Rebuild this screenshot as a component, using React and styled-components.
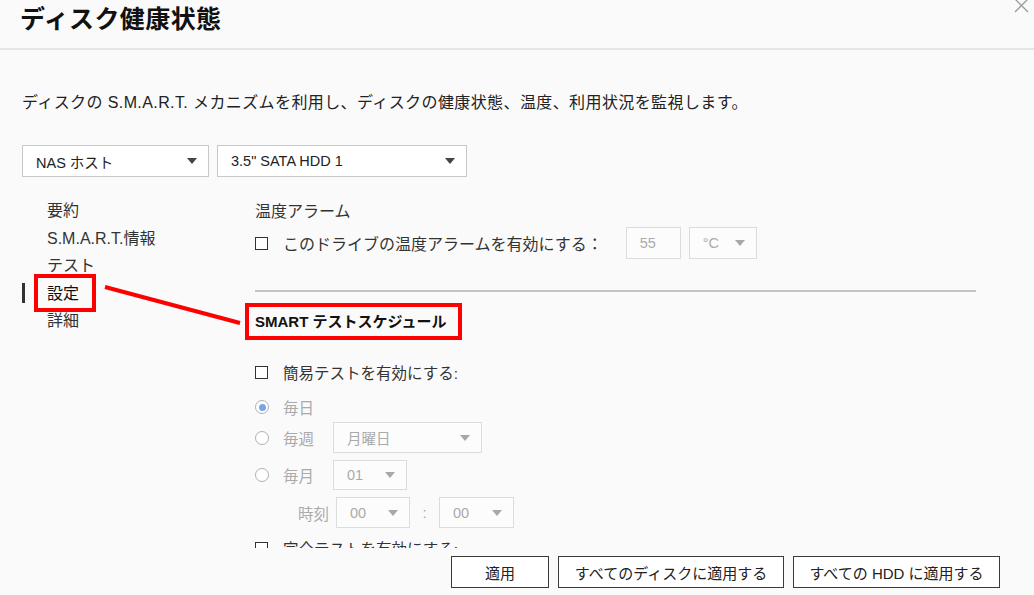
import React from "react";
import styled, { createGlobalStyle, css } from "styled-components";

const GlobalStyle = createGlobalStyle`
  html, body { margin: 0; padding: 0; background: #fafafa; }
  body { font-family: "Liberation Sans", "Noto Sans CJK JP", sans-serif; color: #222; }
  * { box-sizing: border-box; }
`;

const Page = styled.div`
  position: relative;
  width: 1034px;
  height: 595px;
  overflow: hidden;
  display: flex;
  flex-direction: column;
  background: #fafafa;
`;

const Header = styled.header`
  flex: none;
  height: 50px;
  padding: 4px 0 0 20px;
  border-bottom: 2px solid #e6e6e6;
`;

const Title = styled.h1`
  margin: 0;
  font-size: 25px;
  line-height: 30px;
  font-weight: 700;
  letter-spacing: 0.4px;
  color: #111;
`;

const CloseButton = styled.button`
  position: absolute;
  top: -2px;
  left: 1013px;
  width: 17px;
  height: 17px;
  padding: 0;
  border: 0;
  background: transparent;
  color: #9a9a9a;
  display: flex;
`;

const Body = styled.main`
  flex: 1;
  min-height: 0;
  overflow: hidden;
  padding: 41px 0 0 22px;
`;

const Description = styled.p`
  margin: 0;
  font-size: 16px;
  line-height: 24px;
  letter-spacing: 0.4px;
  color: #222;
`;

const SelectRow = styled.div`
  display: flex;
  gap: 8px;
  margin-top: 30px;
`;

const Select = styled.div`
  flex: none;
  width: ${(p) => p.$w}px;
  height: ${(p) => p.$h || 32}px;
  display: flex;
  align-items: center;
  justify-content: space-between;
  padding: 0 11px 0 13px;
  font-size: 14.5px;
  border: 1px solid ${(p) => (p.$disabled ? "#dcdcdc" : "#c8c8c8")};
  background: ${(p) => (p.$disabled ? "#fcfcfc" : "#fff")};
  color: ${(p) => (p.$disabled ? "#aaa" : "#222")};
`;

const Caret = styled.span`
  width: 0;
  height: 0;
  border-left: 5px solid transparent;
  border-right: 5px solid transparent;
  border-top: 6px solid ${(p) => (p.$disabled ? "#a8a8a8" : "#444")};
`;

const Columns = styled.div`
  display: flex;
  margin-top: 20px;
`;

const Nav = styled.nav`
  flex: none;
  width: 233px;
`;

const NavItem = styled.div`
  position: relative;
  height: 27.5px;
  line-height: 27.5px;
  padding-left: 25px;
  font-size: 16px;
  color: #333;
  ${(p) =>
    p.$active &&
    css`
      color: #111;
      &::before {
        content: "";
        position: absolute;
        left: 0;
        top: 3.5px;
        width: 3px;
        height: 20px;
        background: #333;
      }
    `}
`;

const Content = styled.section`
  flex: none;
  width: 721px;
  display: flex;
  flex-direction: column;
`;

const SectionTitle = styled.div`
  font-size: 16px;
  line-height: 30px;
  color: #333;
`;

const Row = styled.div`
  display: flex;
  align-items: center;
  height: ${(p) => p.$h}px;
  margin-top: ${(p) => p.$mt || 0}px;
  padding-left: ${(p) => p.$pl || 0}px;
`;

const Checkbox = styled.span`
  flex: none;
  width: 13px;
  height: 13px;
  border: 1.5px solid #333;
  background: #fff;
  margin-right: 15px;
`;

const Label = styled.span`
  font-size: ${(p) => p.$size || 16}px;
  color: ${(p) => (p.$muted ? "#aaa" : "#333")};
  margin-right: ${(p) => p.$mr || 0}px;
  width: ${(p) => (p.$w ? `${p.$w}px` : "auto")};
  flex: none;
  white-space: nowrap;
`;

const NumberBox = styled.div`
  width: 55px;
  height: 32px;
  border: 1px solid #dcdcdc;
  background: #fcfcfc;
  color: #aaa;
  font-size: 14.5px;
  display: flex;
  align-items: center;
  padding-left: 13px;
  margin-right: 8px;
`;

const Divider = styled.hr`
  margin: 31px 0 0;
  border: 0;
  height: 2px;
  background: #c4c4c4;
`;

const ScheduleTitle = styled.h2`
  margin: 18px 0 0;
  font-size: 15px;
  line-height: 24px;
  font-weight: 700;
  color: #111;
`;

const Radio = styled.span`
  flex: none;
  width: 14px;
  height: 14px;
  border-radius: 50%;
  border: 1px solid #b0b0b0;
  background: #fff;
  margin-right: 14px;
  display: flex;
  align-items: center;
  justify-content: center;
  ${(p) =>
    p.$checked &&
    css`
      &::after {
        content: "";
        width: 7px;
        height: 7px;
        border-radius: 50%;
        background: #7ba4e6;
      }
    `}
`;

const Colon = styled.span`
  width: 29px;
  text-align: center;
  color: #aaa;
  font-size: 15px;
`;

const Footer = styled.footer`
  flex: none;
  height: 47px;
  display: flex;
  justify-content: flex-end;
  align-items: flex-start;
  gap: 9px;
  padding: 8px 34px 0 0;
  background: #fafafa;
`;

const Button = styled.button`
  width: ${(p) => p.$w}px;
  height: 32px;
  border: 1px solid #3a3a3a;
  background: #fff;
  font-family: inherit;
  font-size: 15px;
  color: #222;
  padding: 0;
  white-space: nowrap;
`;

const Annotation = styled.svg`
  position: absolute;
  left: 0;
  top: 0;
  pointer-events: none;
`;

const navItems = ["要約", "S.M.A.R.T.情報", "テスト", "設定", "詳細"];

export default function App() {
  return (
    <Page>
      <GlobalStyle />
      <Header>
        <Title>ディスク健康状態</Title>
        <CloseButton aria-label="閉じる">
          <svg width="17" height="17" viewBox="0 0 17 17">
            <path d="M2 1 L15 14 M15 1 L2 14" stroke="currentColor" strokeWidth="1.3" fill="none" />
          </svg>
        </CloseButton>
      </Header>

      <Body>
        <Description>
          ディスクの S.M.A.R.T. メカニズムを利用し、ディスクの健康状態、温度、利用状況を監視します。
        </Description>

        <SelectRow>
          <Select $w={187}>
            NAS ホスト<Caret />
          </Select>
          <Select $w={250}>
            3.5" SATA HDD 1<Caret />
          </Select>
        </SelectRow>

        <Columns>
          <Nav>
            {navItems.map((item) => (
              <NavItem key={item} $active={item === "設定"}>
                {item}
              </NavItem>
            ))}
          </Nav>

          <Content>
            <SectionTitle>温度アラーム</SectionTitle>
            <Row $h={32}>
              <Checkbox />
              <Label $mr={23}>このドライブの温度アラームを有効にする：</Label>
              <NumberBox>55</NumberBox>
              <Select $w={68} $disabled>
                °C<Caret $disabled />
              </Select>
            </Row>

            <Divider />

            <ScheduleTitle>SMART テストスケジュール</ScheduleTitle>

            <Row $h={24} $mt={26}>
              <Checkbox />
              <Label $size={15.5}>簡易テストを有効にする:</Label>
            </Row>
            <Row $h={24} $mt={11}>
              <Radio $checked />
              <Label $size={15.5} $muted>毎日</Label>
            </Row>
            <Row $h={31} $mt={3}>
              <Radio />
              <Label $size={15.5} $muted $w={50}>毎週</Label>
              <Select $w={149} $h={31} $disabled>
                月曜日<Caret $disabled />
              </Select>
            </Row>
            <Row $h={30} $mt={7}>
              <Radio />
              <Label $size={15.5} $muted $w={50}>毎月</Label>
              <Select $w={74} $h={30} $disabled>
                01<Caret $disabled />
              </Select>
            </Row>
            <Row $h={31} $mt={7} $pl={43}>
              <Label $size={15.5} $muted $mr={7}>時刻</Label>
              <Select $w={74} $h={31} $disabled>
                00<Caret $disabled />
              </Select>
              <Colon>:</Colon>
              <Select $w={75} $h={31} $disabled>
                00<Caret $disabled />
              </Select>
            </Row>
            <Row $h={24} $mt={8}>
              <Checkbox />
              <Label $size={15.5}>完全テストを有効にする:</Label>
            </Row>
          </Content>
        </Columns>
      </Body>

      <Footer>
        <Button $w={98}>適用</Button>
        <Button $w={226}>すべてのディスクに適用する</Button>
        <Button $w={207}>すべての HDD に適用する</Button>
      </Footer>

      <Annotation width="1034" height="595" viewBox="0 0 1034 595">
        <rect x="36" y="276" width="58" height="34" fill="none" stroke="#f00" strokeWidth="4" />
        <line x1="105" y1="287" x2="240" y2="323" stroke="#f00" strokeWidth="4" />
        <rect x="247" y="305" width="213" height="33" fill="none" stroke="#f00" strokeWidth="4" />
      </Annotation>
    </Page>
  );
}
